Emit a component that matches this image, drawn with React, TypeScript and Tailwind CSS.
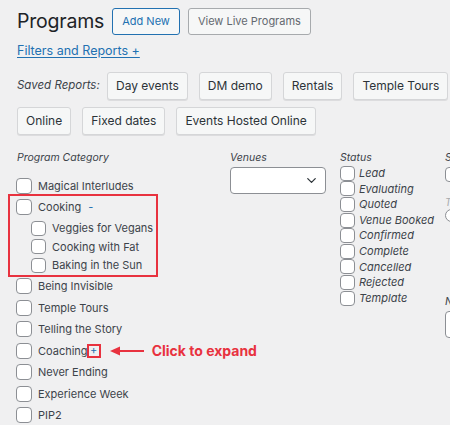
import { ChevronDown } from "lucide-react";

const categories = ["Being Invisible", "Temple Tours", "Telling the Story"];
const moreCategories = ["Never Ending", "Experience Week", "PIP2"];
const cookingKids = ["Veggies for Vegans", "Cooking with Fat", "Baking in the Sun"];
const statuses = ["Lead", "Evaluating", "Quoted", "Venue Booked", "Confirmed", "Complete", "Cancelled", "Rejected", "Template"];

function Box({ small }: { small?: boolean }) {
  return (
    <span
      className={`shrink-0 inline-block rounded-[4px] border border-[#8c8f94] bg-white ${small ? "size-[15px]" : "size-[16px]"}`}
    />
  );
}

function CatRow({ label, children }: { label: string; children?: React.ReactNode }) {
  return (
    <div className="flex items-center h-[21.5px] gap-[6px]">
      <Box />
      <span className="shrink-0 text-[11px] text-[#3c434a] whitespace-nowrap">{label}</span>
      {children}
    </div>
  );
}

function ReportButton({ label }: { label: string }) {
  return (
    <button className="shrink-0 h-[28px] px-[8px] rounded-[3px] border border-[#d5d6d8] bg-[#f6f7f7] shadow-[0_1px_0_#dcdcde] text-[12px] text-[#2c3338] whitespace-nowrap">
      {label}
    </button>
  );
}

export default function App() {
  return (
    <div className="w-[450px] h-[425px] overflow-hidden bg-[#f0f0f1] font-['Inter',sans-serif] text-[#3c434a] pl-[17px] pt-[8px]">
      <div className="flex items-center gap-[8px]">
        <h1 className="text-[19.5px] leading-[27px] text-[#1d2327] tracking-[-0.2px]">Programs</h1>
        <button className="h-[27px] px-[9px] rounded-[3px] border border-[#2271b1] bg-[#f6f7f7] text-[11px] text-[#2271b1]">
          Add New
        </button>
        <button className="h-[27px] px-[9px] rounded-[3px] border border-[#a7aaad] bg-[#f6f7f7] text-[11px] text-[#646970]">
          View Live Programs
        </button>
      </div>

      <a className="block mt-[8px] text-[12.5px] leading-[16px] text-[#2271b1] underline underline-offset-2">
        Filters and Reports +
      </a>

      <div className="mt-[13px] flex items-center gap-[11px]">
        <span className="italic text-[11.5px] text-[#3c434a] mr-[-4px] w-[83px] whitespace-nowrap">Saved Reports:</span>
        <ReportButton label="Day events" />
        <ReportButton label="DM demo" />
        <ReportButton label="Rentals" />
        <ReportButton label="Temple Tours" />
      </div>
      <div className="mt-[7px] flex items-center gap-[11px]">
        <ReportButton label="Online" />
        <ReportButton label="Fixed dates" />
        <ReportButton label="Events Hosted Online" />
      </div>

      <div className="mt-[15px] flex">
        <div className="w-[214px] shrink-0 -ml-[1px]">
          <div className="italic text-[10.5px] leading-[16px] ml-[1px] mb-[9px] text-[#3c434a]">Program Category</div>
          <CatRow label="Magical Interludes" />
          <div className="relative">
            <CatRow label="Cooking">
              <span className="text-[#2271b1] text-[11px] ml-[1px]">-</span>
            </CatRow>
            <div className="pl-[15px] py-[1px]">
              {cookingKids.map((k) => (
                <div key={k} className="flex items-center h-[18.5px] gap-[6px]">
                  <Box small />
                  <span className="text-[11px] whitespace-nowrap">{k}</span>
                </div>
              ))}
            </div>
            <div className="absolute left-[-8px] top-[-2.5px] w-[150px] h-[83px] border-[2.5px] border-[#e8323f]" />
          </div>
          {categories.map((c) => (
            <CatRow key={c} label={c} />
          ))}
          <CatRow label="Coaching">
            <span className="shrink-0 -ml-[7px] size-[14px] border-2 border-[#e8323f] flex items-center justify-center text-[#2271b1] text-[11px] leading-none">
              +
            </span>
            <svg width="36" height="10" viewBox="0 0 36 10" className="shrink-0 ml-[3px]">
              <path d="M4 5 L34 5" stroke="#e8323f" strokeWidth="2" />
              <path d="M0 5 L10 0.5 L10 9.5 Z" fill="#e8323f" />
            </svg>
            <span className="shrink-0 text-[14px] font-bold text-[#e8323f] whitespace-nowrap">Click to expand</span>
          </CatRow>
          {moreCategories.map((c) => (
            <CatRow key={c} label={c} />
          ))}
        </div>

        <div className="w-[110px] shrink-0">
          <div className="italic text-[10.5px] leading-[16px] text-[#3c434a]">Venues</div>
          <div className="mt-[1px] w-[96px] h-[27px] rounded-[4px] border border-[#8c8f94] bg-white flex items-center justify-end pr-[6px]">
            <ChevronDown className="size-[15px] text-[#2c3338]" strokeWidth={2} />
          </div>
        </div>

        <div className="w-[105px] shrink-0">
          <div className="italic text-[10.5px] leading-[16px] text-[#3c434a]">Status</div>
          <div className="mt-[-0.5px]">
            {statuses.map((s) => (
              <div key={s} className="flex items-center h-[15.6px] gap-[4px]">
                <span className="shrink-0 size-[15px] rounded-[4px] border border-[#8c8f94] bg-white" />
                <span className="italic text-[11px] whitespace-nowrap">{s}</span>
              </div>
            ))}
          </div>
        </div>

        <div className="w-[60px] shrink-0">
          <div className="italic text-[10.5px] leading-[16px]">Sort</div>
          <span className="block mt-[1px] size-[15px] rounded-[4px] border border-[#8c8f94] bg-white" />
          <div className="mt-[14px] italic text-[10px] leading-[12px] text-[#a7aaad]">Type</div>
          <span className="block mt-[1px] size-[13px] rounded-full border border-[#8c8f94] bg-white" />
          <div className="mt-[72px] italic text-[10.5px] leading-[16px]">Notes</div>
          <div className="mt-[1px] w-[60px] h-[27px] rounded-[4px] border border-[#8c8f94] bg-white" />
        </div>
      </div>
    </div>
  );
}
